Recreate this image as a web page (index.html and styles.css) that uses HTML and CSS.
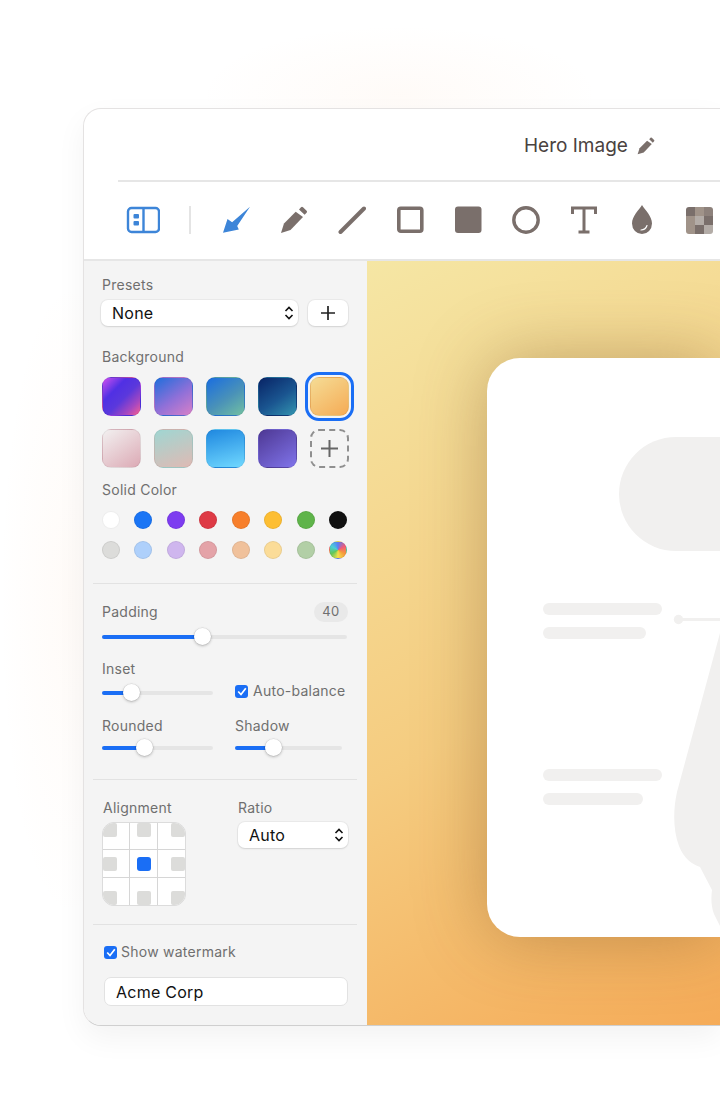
FILE: index.html
```html
<!DOCTYPE html>
<html lang="en">
<head>
  <meta charset="UTF-8" />
  <title>Hero Image</title>
  <link rel="stylesheet" href="styles.css">
</head>
<body>
  <div class="window">
    <header class="header">
      <div class="title-row">
        <span class="title">Hero Image</span>
        <svg class="title-pencil" width="18" height="18" viewBox="0 0 28 28"><path d="M1 27l3-9.5L15.7 5.7 23 11 10.5 24z"/><path d="M19 3.4l2-2.2a1.4 1.4 0 0 1 2 0l3.6 3.5a1.4 1.4 0 0 1 0 2l-2 2.1z"/></svg>
      </div>
      <div class="toolbar">
        <svg class="tool tool-panel" width="34" height="28" viewBox="0 0 34 28"><rect x="2" y="2" width="31" height="24" rx="3.5" fill="none" stroke="#3d85d8" stroke-width="2.4"/><path d="M17.500 2v24" stroke="#3d85d8" stroke-width="2.4"/><rect x="7.500" y="8" width="5.500" height="4.500" rx="1" fill="#3d85d8"/><rect x="7.500" y="15" width="5.500" height="4.500" rx="1" fill="#3d85d8"/></svg>
        <span class="tool-sep"></span>
        <svg class="tool" width="28" height="28" viewBox="0 0 28 28"><path d="M1 26.7L5.5 13l4.6 3.3L28 .7 15.2 20l1.6 3.6z" fill="#3d85d8"/></svg>
        <svg class="tool" width="28" height="28" viewBox="0 0 28 28" fill="#7a6f6b"><path d="M1 27l3-9.5L15.7 5.7 23 11 10.5 24z"/><path d="M19 3.4l2-2.2a1.4 1.4 0 0 1 2 0l3.6 3.5a1.4 1.4 0 0 1 0 2l-2 2.1z"/></svg>
        <svg class="tool" width="28" height="28" viewBox="0 0 28 28"><path d="M2.5 26L26 2.5" stroke="#7a6f6b" stroke-width="4" stroke-linecap="round"/></svg>
        <svg class="tool" width="28" height="28" viewBox="0 0 28 28"><rect x="2.8" y="2.2" width="23" height="23" rx="2" fill="none" stroke="#7a6f6b" stroke-width="3.6"/></svg>
        <svg class="tool" width="28" height="28" viewBox="0 0 28 28"><rect x="1" y=".5" width="26.5" height="26.5" rx="3" fill="#7a6f6b"/></svg>
        <svg class="tool" width="28" height="28" viewBox="0 0 28 28"><circle cx="14" cy="14" r="12.2" fill="none" stroke="#7a6f6b" stroke-width="3.4"/></svg>
        <svg class="tool" width="28" height="28" viewBox="0 0 28 28"><path d="M2.500 8V2h23v6M14 2v24M8.500 26h11" fill="none" stroke="#7a6f6b" stroke-width="3"/></svg>
        <svg class="tool" width="28" height="30" viewBox="0 0 28 30"><path d="M14 0c3 5 10 11 10 18.500a10 10.500 0 0 1-20 0C4 11 11 5 14 0z" fill="#7a6f6b"/><path d="M13 25c3 0 5-1.500 6-4.500" fill="none" stroke="#fff" stroke-width="1.200" stroke-linecap="round"/></svg>
        <div class="mosaic">
          <i class="m1"></i><i class="m2"></i><i class="m3"></i>
          <i class="m2"></i><i class="m4"></i><i class="m1"></i>
          <i class="m2"></i><i class="m1"></i><i class="m4"></i>
        </div>
      </div>
    </header>

    <div class="main">
      <aside class="sidebar">
        <div class="section">
          <div class="label">Presets</div>
          <div class="preset-row">
            <div class="select select-wide">
              <span>None</span>
              <svg width="10" height="16" viewBox="0 0 10 16"><path d="M1.500 6L5 2.500 8.500 6M1.500 10L5 13.500 8.500 10" fill="none" stroke="#111" stroke-width="1.600"/></svg>
            </div>
            <div class="add-btn">
              <svg width="14" height="14" viewBox="0 0 14 14"><path d="M7 0v14M0 7h14" stroke="#222" stroke-width="1.700"/></svg>
            </div>
          </div>

          <div class="label label-bg">Background</div>
          <div class="swatches">
            <div class="swatch s1"></div>
            <div class="swatch s2"></div>
            <div class="swatch s3"></div>
            <div class="swatch s4"></div>
            <div class="swatch s5 selected"></div>
            <div class="swatch s6"></div>
            <div class="swatch s7"></div>
            <div class="swatch s8"></div>
            <div class="swatch s9"></div>
            <div class="swatch swatch-add">
              <svg width="17" height="17" viewBox="0 0 17 17"><path d="M8.500 0v17M0 8.500h17" stroke="#666" stroke-width="2"/></svg>
            </div>
          </div>

          <div class="label label-solid">Solid Color</div>
          <div class="dots">
            <i class="dot" style="background:#ffffff"></i>
            <i class="dot" style="background:#1a75f5"></i>
            <i class="dot" style="background:#7d3cf0"></i>
            <i class="dot" style="background:#de3a45"></i>
            <i class="dot" style="background:#f77f2b"></i>
            <i class="dot" style="background:#fdbe32"></i>
            <i class="dot" style="background:#5fb44a"></i>
            <i class="dot" style="background:#111111"></i>
            <i class="dot" style="background:#dcdcda"></i>
            <i class="dot" style="background:#aed0fb"></i>
            <i class="dot" style="background:#cfb6ee"></i>
            <i class="dot" style="background:#e4a3a8"></i>
            <i class="dot" style="background:#f0c19b"></i>
            <i class="dot" style="background:#fbdc98"></i>
            <i class="dot" style="background:#b2cfa6"></i>
            <i class="dot dot-wheel"></i>
          </div>
        </div>

        <div class="divider divider-one"></div>

        <div class="section">
          <div class="padding-head">
            <span class="label">Padding</span>
            <span class="badge">40</span>
          </div>
          <div class="slider slider-padding"><div class="fill" style="width:41.200%"></div></div>

          <div class="controls">
            <div class="control">
              <div class="label">Inset</div>
              <div class="slider"><div class="fill" style="width:27%"></div></div>
            </div>
            <label class="check check-inset"><span class="box"><svg width="10" height="9" viewBox="0 0 10 9"><path d="M1.200 4.500L4 7.500 8.800 1.200" fill="none" stroke="#fff" stroke-width="1.700"/></svg></span>Auto-balance</label>
            <div class="control">
              <div class="label">Rounded</div>
              <div class="slider"><div class="fill" style="width:39%"></div></div>
            </div>
            <div class="control control-short">
              <div class="label">Shadow</div>
              <div class="slider"><div class="fill" style="width:36%"></div></div>
            </div>
          </div>
        </div>

        <div class="divider divider-two"></div>

        <div class="section align-section">
          <div>
            <div class="label label-nudge">Alignment</div>
            <div class="align-grid">
              <div class="cell tl"><i></i></div><div class="cell tc"><i></i></div><div class="cell tr"><i></i></div>
              <div class="cell ml"><i></i></div><div class="cell mc"><i class="on"></i></div><div class="cell mr"><i></i></div>
              <div class="cell bl"><i></i></div><div class="cell bc"><i></i></div><div class="cell br"><i></i></div>
            </div>
          </div>
          <div>
            <div class="label">Ratio</div>
            <div class="select select-ratio">
              <span>Auto</span>
              <svg width="10" height="16" viewBox="0 0 10 16"><path d="M1.500 6L5 2.500 8.500 6M1.500 10L5 13.500 8.500 10" fill="none" stroke="#111" stroke-width="1.600"/></svg>
            </div>
          </div>
        </div>

        <div class="divider divider-three"></div>

        <div class="section">
          <label class="check check-mark"><span class="box"><svg width="10" height="9" viewBox="0 0 10 9"><path d="M1.200 4.500L4 7.500 8.800 1.200" fill="none" stroke="#fff" stroke-width="1.700"/></svg></span>Show watermark</label>
          <div class="text-input">Acme Corp</div>
        </div>
      </aside>

      <main class="canvas">
        <div class="card">
          <svg width="233" height="579" viewBox="0 0 233 579" fill="#f1f0ef">
            <rect x="132" y="79" width="200" height="114" rx="57"/>
            <rect x="56" y="245" width="119" height="12" rx="6"/>
            <rect x="56" y="269" width="103" height="12" rx="6"/>
            <rect x="56" y="411" width="119" height="12" rx="6"/>
            <rect x="56" y="435" width="100" height="12" rx="6"/>
            <circle cx="191.500" cy="261.500" r="4.700"/>
            <rect x="191" y="260" width="42" height="3"/>
            <path d="M236 264L190 434C186 452 186 472 192 488C197 501 205 506 213 509L225 532C224 540 224 548 227 556L236 574z"/>
          </svg>
        </div>
      </main>
    </div>
  </div>
</body>
</html>
```

FILE: styles.css
```css
html, body {
  margin: 0;
  padding: 0;
  height: 100%;
}
body {
  font-family: Inter, "Liberation Sans", sans-serif;
  overflow: hidden;
  background:
    radial-gradient(ellipse 200px 70px at 400px 95px, rgba(250,170,110,0.05), transparent),
    radial-gradient(ellipse 70px 320px at 70px 600px, rgba(250,170,110,0.05), transparent),
    #fff;
}
.window {
  box-sizing: border-box;
  width: 637px;
  height: 918px;
  margin: 108px 0 0 83px;
  background: #fff;
  border: 1px solid #e4e2e2;
  border-right: 0;
  border-bottom-color: #cfcfcf;
  border-radius: 18px 0 0 18px;
  overflow: hidden;
  box-shadow: 0 12px 30px rgba(0,0,0,0.05);
}
.header {
  height: 150px;
  border-bottom: 2px solid #e6e6e6;
}
.title-row {
  display: flex;
  align-items: center;
  gap: 9px;
  height: 69px;
  margin-left: 34px;
  padding: 2px 0 0 406px;
  border-bottom: 2px solid #e6e6e6;
}
.title {
  font-size: 19px;
  color: #4a4240;
}
.title-pencil {
  fill: #7a6f6b;
}
.toolbar {
  display: flex;
  align-items: center;
  height: 76px;
  padding-left: 42px;
  gap: 30px;
}
.tool {
  flex: none;
}
.tool-sep {
  width: 2px;
  height: 28px;
  background: #e4e4e4;
  margin: 0 1px 0 -1px;
}
.mosaic {
  display: grid;
  grid-template-columns: repeat(3, 9px);
  grid-auto-rows: 9px;
  border-radius: 3px;
  overflow: hidden;
  flex: none;
}
.m1 { background: #7a6f6b; }
.m2 { background: #a09389; }
.m3 { background: #8d817b; }
.m4 { background: #b3aca7; }

.main {
  display: flex;
  height: 765px;
}
.sidebar {
  flex: none;
  box-sizing: border-box;
  width: 283px;
  padding-top: 15px;
  background: #f4f4f4;
}
.section {
  padding: 0 19px 0 18px;
}
.label {
  font-size: 14px;
  line-height: 18px;
  letter-spacing: 0.25px;
  color: #6f6f6f;
}
.preset-row {
  display: flex;
  gap: 10px;
  margin: 6px 0 0 -1px;
}
.select {
  box-sizing: border-box;
  display: flex;
  align-items: center;
  justify-content: space-between;
  height: 26px;
  padding: 0 4px 0 11px;
  background: #fff;
  border-radius: 7px;
  box-shadow: 0 0 0 1px rgba(0,0,0,0.04), 0 1px 2px rgba(0,0,0,0.1);
  font-size: 16px;
  letter-spacing: 0.25px;
  color: #111;
}
.select-wide {
  width: 197px;
}
.add-btn {
  display: flex;
  align-items: center;
  justify-content: center;
  width: 40px;
  height: 26px;
  background: #fff;
  border-radius: 7px;
  box-shadow: 0 0 0 1px rgba(0,0,0,0.04), 0 1px 2px rgba(0,0,0,0.1);
}
.label-bg {
  margin-top: 22px;
}
.swatches {
  display: grid;
  grid-template-columns: repeat(5, 39px);
  grid-auto-rows: 39px;
  gap: 13px;
  margin: 11px 0 0 -0.5px;
}
.swatch {
  position: relative;
  box-sizing: border-box;
  border-radius: 9px;
  border: 1px solid rgba(0,0,0,0.06);
}
.s1 { background: linear-gradient(135deg, #d050f0 0%, #5030e4 32%, #5a38dc 55%, #a848c0 80%, #fa6090 100%); }
.s2 { background: linear-gradient(145deg, #1f6edc, #9070d8 55%, #d880c8); }
.s3 { background: linear-gradient(145deg, #1a6ee0, #4a92b8 55%, #72c0a2); }
.s4 { background: linear-gradient(145deg, #082466, #1a5590 55%, #3394b0); }
.s5 { background: linear-gradient(145deg, #f5dc95, #f5ab55); }
.s6 { background: linear-gradient(145deg, #f2f0f0, #dcaab5); }
.s7 { background: linear-gradient(160deg, #a0d6d2, #dfbab4); }
.s8 { background: linear-gradient(165deg, #1f88e0, #70d8ff); }
.s9 { background: linear-gradient(145deg, #4e3894, #8074ea); }
.selected::after {
  content: "";
  position: absolute;
  inset: -6px;
  border: 3px solid #1a6ef5;
  border-radius: 14px;
}
.swatch-add {
  display: flex;
  align-items: center;
  justify-content: center;
  border: 2px dashed #8f8f8f;
}
.label-solid {
  margin-top: 13px;
}
.dots {
  display: grid;
  grid-template-columns: repeat(8, 18px);
  grid-auto-rows: 18px;
  column-gap: 14.5px;
  row-gap: 12px;
  margin: 12px 0 0 -0.5px;
}
.dot {
  display: block;
  box-sizing: border-box;
  border-radius: 50%;
  border: 1px solid rgba(0,0,0,0.07);
}
.dot-wheel {
  background: conic-gradient(#5a7ef5, #f05a78, #f59a3c, #f5e04a, #62c75a, #4ad0d8, #5a7ef5);
}
.divider {
  height: 1px;
  margin: 0 10px 0 9px;
  background: #e2e2e2;
}
.divider-one {
  margin-top: 24px;
  margin-bottom: 19px;
}
.divider-two {
  margin-top: 29px;
  margin-bottom: 19px;
}
.divider-three {
  margin-top: 18px;
  margin-bottom: 18px;
}
.padding-head {
  display: flex;
  align-items: flex-start;
  justify-content: space-between;
}
.badge {
  width: 34px;
  height: 20px;
  margin-top: -1px;
  border-radius: 10px;
  background: #e9e9e9;
  font-size: 13px;
  line-height: 19px;
  letter-spacing: 0.4px;
  text-align: center;
  color: #6f6f6f;
}
.slider {
  height: 4px;
  border-radius: 2px;
  background: #e5e5e5;
  margin-top: 13px;
}
.slider-padding {
  margin: 13px 1px 0 0;
}
.fill {
  position: relative;
  height: 100%;
  border-radius: 2px;
  background: #1a6ef5;
}
.fill::after {
  content: "";
  position: absolute;
  right: -8px;
  top: -7px;
  width: 17px;
  height: 17px;
  border-radius: 50%;
  background: #fff;
  box-shadow: 0 0 0 0.5px rgba(0,0,0,0.1), 0 1px 3px rgba(0,0,0,0.25);
}
.controls {
  display: grid;
  grid-template-columns: 111px 1fr;
  column-gap: 22px;
  row-gap: 22px;
  margin-top: 21px;
}
.control .slider {
  margin-top: 11px;
}
.controls .control:first-child .slider {
  margin-top: 13px;
}
.control-short .slider {
  width: 107px;
}
.check {
  display: flex;
  align-items: center;
  gap: 5px;
  font-size: 14px;
  line-height: 18px;
  letter-spacing: 0.25px;
  color: #6f6f6f;
}
.check-inset {
  align-self: end;
  margin-bottom: -5px;
}
.box {
  display: flex;
  align-items: center;
  justify-content: center;
  width: 13px;
  height: 13px;
  border-radius: 3px;
  background: #1a6ef5;
}
.check-mark {
  gap: 4px;
  padding-left: 2px;
}
.align-section {
  display: flex;
  gap: 52px;
}
.label-nudge {
  padding-left: 1px;
}
.align-grid {
  box-sizing: border-box;
  display: grid;
  grid-template-columns: 26px 27px 27px;
  grid-template-rows: 26px 27px 27px;
  gap: 1px;
  width: 84px;
  height: 84px;
  margin-top: 5px;
  background: #d6d6d6;
  border: 1px solid #dcdcdc;
  border-radius: 12px;
  overflow: hidden;
}
.cell {
  display: flex;
  background: #fff;
}
.cell i {
  display: block;
  width: 14px;
  height: 14px;
  border-radius: 2px;
  background: #dcdcda;
}
.cell i.on {
  background: #1a6ef5;
  border-radius: 3px;
}
.tc, .mc, .bc { justify-content: center; }
.tr, .mr, .br { justify-content: flex-end; }
.ml, .mc, .mr { align-items: center; }
.bl, .bc, .br { align-items: flex-end; }
.select-ratio {
  width: 110px;
  margin-top: 5px;
}
.text-input {
  box-sizing: border-box;
  width: 244px;
  height: 29px;
  margin: 16px 0 0 2px;
  padding-left: 11px;
  background: #fff;
  border: 1px solid #e2e2e2;
  border-radius: 7px;
  font-size: 16px;
  line-height: 28px;
  letter-spacing: 0.25px;
  color: #111;
}
.canvas {
  flex: 1;
  box-sizing: border-box;
  padding: 97px 0 0 120px;
  background: linear-gradient(152deg, #f5e6a4 0%, #f5cc80 55%, #f5ab58 100%);
}
.card {
  height: 579px;
  border-radius: 33px 0 0 33px;
  background: #fff;
  box-shadow: 0 0 70px rgba(110,70,30,0.38);
}
.card svg {
  display: block;
}
```
